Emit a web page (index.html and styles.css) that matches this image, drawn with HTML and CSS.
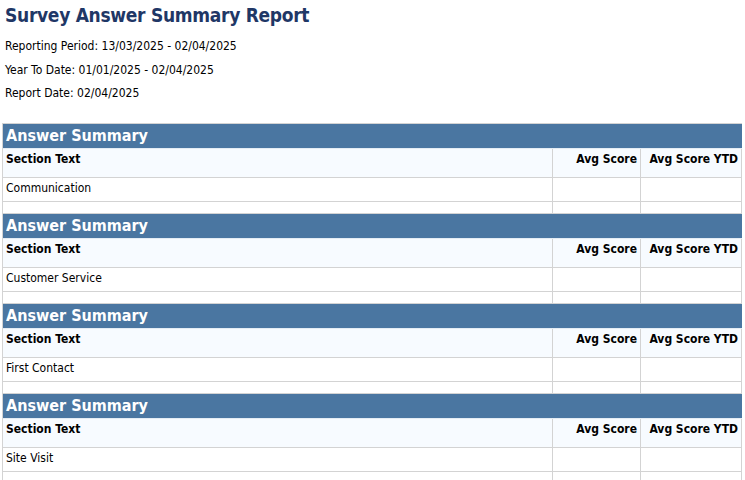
FILE: index.html
```html
<!DOCTYPE html>
<html>
<head>
<meta charset="utf-8">
<title>Survey Answer Summary Report</title>
<link rel="stylesheet" href="styles.css">
</head>
<body>
<div class="page">
  <h1 class="title">Survey Answer Summary Report</h1>
  <div class="meta">
    <p class="meta-line">Reporting Period: 13/03/2025 - 02/04/2025</p>
    <p class="meta-line">Year To Date: 01/01/2025 - 02/04/2025</p>
    <p class="meta-line">Report Date: 02/04/2025</p>
  </div>
  <table class="report">
    <colgroup>
      <col class="col-text">
      <col class="col-avg">
      <col class="col-ytd">
    </colgroup>
    <tbody>
      <tr class="band"><td colspan="3">Answer Summary</td></tr>
      <tr class="head"><th class="left">Section Text</th><th class="num">Avg Score</th><th class="num">Avg Score YTD</th></tr>
      <tr class="data"><td>Communication</td><td></td><td></td></tr>
      <tr class="spacer"><td></td><td></td><td></td></tr>

      <tr class="band"><td colspan="3">Answer Summary</td></tr>
      <tr class="head"><th class="left">Section Text</th><th class="num">Avg Score</th><th class="num">Avg Score YTD</th></tr>
      <tr class="data"><td>Customer Service</td><td></td><td></td></tr>
      <tr class="spacer"><td></td><td></td><td></td></tr>

      <tr class="band"><td colspan="3">Answer Summary</td></tr>
      <tr class="head"><th class="left">Section Text</th><th class="num">Avg Score</th><th class="num">Avg Score YTD</th></tr>
      <tr class="data"><td>First Contact</td><td></td><td></td></tr>
      <tr class="spacer"><td></td><td></td><td></td></tr>

      <tr class="band"><td colspan="3">Answer Summary</td></tr>
      <tr class="head"><th class="left">Section Text</th><th class="num">Avg Score</th><th class="num">Avg Score YTD</th></tr>
      <tr class="data"><td>Site Visit</td><td></td><td></td></tr>
      <tr class="spacer"><td></td><td></td><td></td></tr>
    </tbody>
  </table>
</div>
</body>
</html>
```
FILE: styles.css
```css
html, body {
  margin: 0;
  padding: 0;
  background: #ffffff;
}
body {
  font-family: "DejaVu Sans Condensed", "DejaVu Sans", sans-serif;
  font-size: 12px;
  color: #000000;
}
.page {
  padding: 0 3px 0 2px;
}
.title {
  margin: 0;
  padding: 4px 0 0 3px;
  font-size: 19px;
  letter-spacing: -0.3px;
  line-height: 23px;
  font-weight: bold;
  color: #1f3766;
}
.meta {
  padding: 11px 0 0 3px;
}
.meta-line {
  margin: 0;
  height: 23.5px;
  line-height: 16px;
}
.report {
  margin-top: 14px;
  width: 739px;
  border-collapse: separate;
  border-spacing: 0;
  border-top: 1px solid #d3d3d3;
  border-left: 1px solid #d3d3d3;
  table-layout: fixed;
}
.col-text { width: 550px; }
.col-avg { width: 88px; }
.col-ytd { width: 101px; }
.report td, .report th {
  border-right: 1px solid #d3d3d3;
  border-bottom: 1px solid #d3d3d3;
  padding: 0 3px;
  vertical-align: top;
}
.band td {
  background: #4a76a1;
  color: #ffffff;
  font-weight: bold;
  font-size: 16px;
  height: 25px;
  line-height: 20px;
  padding-top: 2px;
  box-sizing: border-box;
  border-right: 0;
  border-bottom: 1px solid #e4ecf4;
}
.head th {
  background: #f7fbff;
  font-weight: bold;
  height: 29px;
  box-sizing: border-box;
  padding-top: 3px;
  line-height: 15px;
}
.head th.left { text-align: left; }
.head th.num { text-align: right; }
.data td {
  height: 24px;
  box-sizing: border-box;
  padding-top: 3px;
  line-height: 15px;
}
.spacer td {
  height: 12px;
  box-sizing: border-box;
  padding: 0;
}
```
